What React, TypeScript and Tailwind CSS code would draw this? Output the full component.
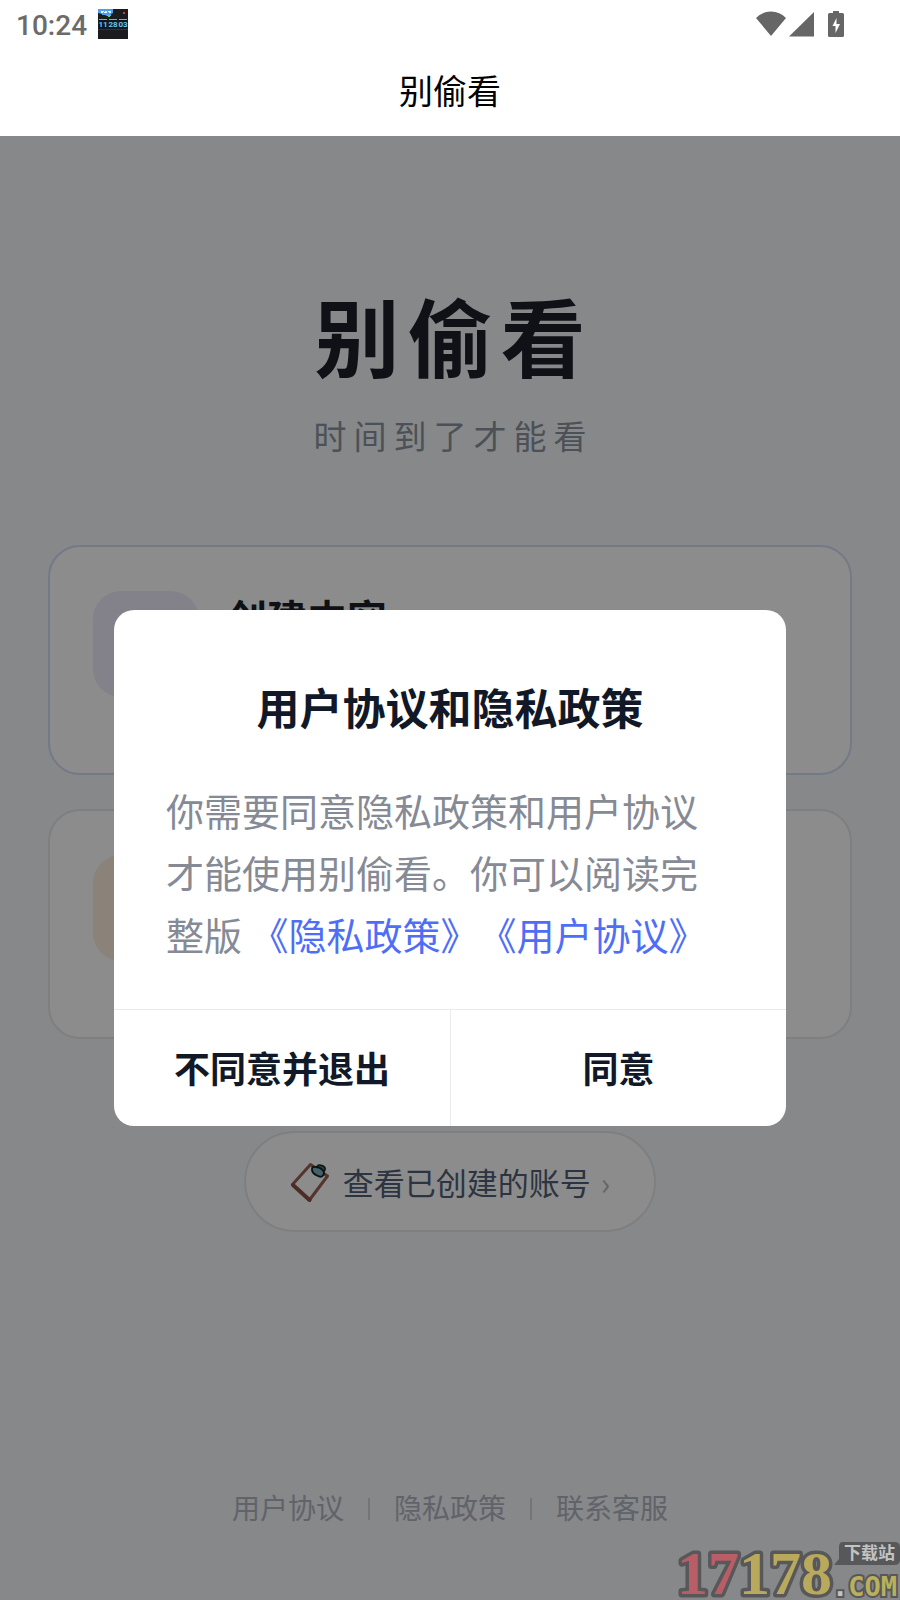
import { useState } from "react";

const FOOTER_LINKS = ["用户协议", "隐私政策", "联系客服"];

function ClockAppIcon() {
  return (
    <svg className="h-[30px] w-[30px]" viewBox="0 0 30 30" aria-hidden="true">
      <rect width="30" height="30" fill="#1c1c1f" />
      <path d="M0 0h15v4l-2 1v2H9L7 6H4V5L0 4z" fill="#4d9fee" />
      <path d="M9 6h4v1h-1v1h-2V7H9z" fill="#3ddc77" />
      <path d="M3 2.500h3M7 2.500h2M10 2.500h3M3 3.500h2M6 3.500h3M11 3.500h2" stroke="#e8f3ff" strokeWidth="1" />
      <rect x="25" y="3" width="2" height="2" fill="#e03535" />
      <path d="M1 10.500h8M11 10.500h8M21 10.500h8" stroke="#a0a3a6" />
      <path d="M1 11h8v9H1zM11 11h8v9h-8zM21 11h8v9h-8z" fill="#0c1825" />
      <g fill="#63c8f5" fontFamily="Roboto" fontWeight="700" fontSize="8" textAnchor="middle">
        <text x="5" y="18">11</text>
        <text x="15" y="18">28</text>
        <text x="25" y="18">03</text>
      </g>
      <path d="M0 20.500h30" stroke="#333" />
    </svg>
  );
}

function StatusBar() {
  return (
    <div className="flex h-12 items-center pl-4 pr-14">
      <span className="pt-1 font-[Roboto] text-[28px] font-medium leading-8 text-[#6b6b6b]">10:24</span>
      <span className="ml-[11px]">
        <ClockAppIcon />
      </span>
      <div className="ml-auto flex items-center">
        <svg className="h-[26px] w-[30px]" viewBox="0 0 30 26" fill="#666" aria-hidden="true">
          <path d="M0 7Q6 0.500 15 0.500T30 7L15 25z" />
        </svg>
        <svg className="ml-[3px] h-[26px] w-[25px]" viewBox="0 0 25 26" fill="#666" aria-hidden="true">
          <path d="M25 1v24.500H0z" />
        </svg>
        <svg className="ml-[14px] h-[26px] w-4" viewBox="0 0 16 26" aria-hidden="true">
          <path d="M5 0h6v2h3.500Q16 2 16 3.500v21Q16 26 14.500 26h-13Q0 26 0 24.500v-21Q0 2 1.500 2H5z" fill="#666" />
          <path d="M8.500 7v6H12L7.500 22v-7H4.500z" fill="#fff" />
        </svg>
      </div>
    </div>
  );
}

function ClipboardIcon() {
  return (
    <svg className="h-10 w-10" viewBox="0 0 40 40" aria-hidden="true">
      <path d="M20.500 2.500L37.500 14L19.500 38L2.500 22.500z" fill="none" stroke="#9a6154" strokeWidth="3" strokeLinejoin="round" />
      <path d="M3 23L19.500 38" stroke="#8b5044" strokeWidth="4" strokeLinecap="round" />
      <path d="M27 4.500Q28 2 32 3.500Q36 5 35 8l-2 2-6-3z" fill="#4f7780" stroke="#16201f" strokeWidth="1.500" />
      <path d="M22 8Q21.500 4 25.500 5Q30 5 33 8.500Q35 11 33 13.500Q31 16 27 13.500Q22.500 11.500 22 8z" fill="#7cb3c4" stroke="#16201f" strokeWidth="1.800" />
    </svg>
  );
}

type EntryCardProps = {
  title?: string;
  label: string;
  border: string;
  tint: string;
};

function EntryCard({ title, label, border, tint }: EntryCardProps) {
  return (
    <button
      aria-label={label}
      className={`flex h-[230px] w-full items-start gap-7 rounded-[32px] border-2 bg-white px-[43px] py-11 text-left ${border}`}
    >
      <span className={`h-[106px] w-[106px] shrink-0 rounded-[28px] ${tint}`} />
      {title && <span className="text-[40px] font-bold leading-[52px] text-[#1d1f2b]">{title}</span>}
    </button>
  );
}

function Watermark() {
  return (
    <svg className="pointer-events-none absolute bottom-0 right-0 h-[64px] w-[224px]" viewBox="0 0 224 64" aria-hidden="true">
      <text
        x="1"
        y="58"
        fontFamily="Liberation Serif"
        fontWeight="700"
        fontSize="62"
        stroke="#58585b"
        strokeWidth="7"
        strokeLinejoin="round"
        paintOrder="stroke"
      >
        <tspan fill="#b95d66">17</tspan>
        <tspan fill="#b9a95c">178</tspan>
      </text>
      <path d="M167 6h51q6 0 6 5v13q0 5-6 5h-51l-9 0 5-6V11q0-5 4-5z" fill="#58585b" />
      <text x="168" y="23" fill="#c3c3c3" fontFamily="Noto Sans CJK SC" fontWeight="700" fontSize="17">下载站</text>
      <text x="156" y="60" fill="#b9b05c" stroke="#58585b" strokeWidth="4" paintOrder="stroke" fontFamily="DejaVu Sans Mono" fontWeight="700" fontSize="27">
        <tspan fill="#c3c3c3">.</tspan>COM
      </text>
    </svg>
  );
}

export default function App() {
  const [open, setOpen] = useState(true);

  return (
    <div className="relative flex min-h-screen flex-col bg-white font-['Noto_Sans_CJK_SC',sans-serif]">
      <header>
        <StatusBar />
        <h1 className="h-[88px] pt-[19px] text-center text-[34px] leading-[46px] text-black">别偷看</h1>
      </header>

      <div className="relative flex flex-1 flex-col">
        <main className="flex flex-1 flex-col items-center bg-[#f6f8fa] px-12 pt-[142px]">
          <h2 className="pl-[8px] text-[85px] font-bold leading-[112px] tracking-[8px] text-[#1d1f2b]">别偷看</h2>
          <p className="mt-[22px] pl-[7px] text-[33px] leading-[46px] tracking-[7px] text-[#8a949e]">时间到了才能看</p>
          <div className="mt-[87px] flex w-full flex-col gap-[34px]">
            <EntryCard title="创建内容" label="创建内容" border="border-[#d3ddf8]" tint="bg-[#eeecfb]" />
            <EntryCard label="查看内容" border="border-[#e5e7eb]" tint="bg-[#fdeedd]" />
          </div>
          <button className="mt-[92px] flex h-[101px] items-center rounded-full border-2 border-[#e5e7eb] bg-white px-11">
            <ClipboardIcon />
            <span className="ml-[13px] text-[31px] leading-[44px] text-[#505f78]">查看已创建的账号</span>
            <span className="ml-[10px] text-[31px] leading-[44px] text-[#b4b8c0]">›</span>
          </button>
          <footer className="mb-[71px] mt-auto flex items-center gap-6 text-[28px] leading-[44px] text-[#b1b4c2]">
            {FOOTER_LINKS.map((label, i) => (
              <span key={label} className="flex items-center gap-6">
                {i > 0 && <span className="mt-1 h-[22px] w-[2px] bg-[#d4d6dc]" />}
                <a href="#">{label}</a>
              </span>
            ))}
          </footer>
        </main>

        {/* Backdrop */}
        {open && <div className="absolute inset-0 bg-black/45" />}
      </div>

      {/* Agreement dialog */}
      {open && (
        <div className="absolute inset-0 flex items-center justify-center px-[114px] pt-[136px]">
          <div role="dialog" aria-labelledby="agreement-title" className="w-full overflow-hidden rounded-[20px] bg-white">
            <h3 id="agreement-title" className="pt-[65px] text-center text-[43px] font-bold leading-[62px] text-[#111827]">
              用户协议和隐私政策
            </h3>
            <p className="px-[52px] pb-11 pt-[42px] text-[38px] leading-[62px] text-[#858a95] [text-spacing-trim:space-all]">
              你需要同意隐私政策和用户协议才能使用别偷看。你可以阅读完整版{" "}
              <a href="#" className="text-[#4f6ef7]">《隐私政策》</a>
              <a href="#" className="text-[#4f6ef7]">《用户协议》</a>
            </p>
            <div className="grid grid-cols-2 border-t border-[#ebebeb] text-[36px] font-bold text-[#111827]">
              <button className="h-[116px] pb-[2px]">不同意并退出</button>
              <button className="h-[116px] border-l border-[#ebebeb] pb-[2px]" onClick={() => setOpen(false)}>
                同意
              </button>
            </div>
          </div>
        </div>
      )}

      <Watermark />
    </div>
  );
}
